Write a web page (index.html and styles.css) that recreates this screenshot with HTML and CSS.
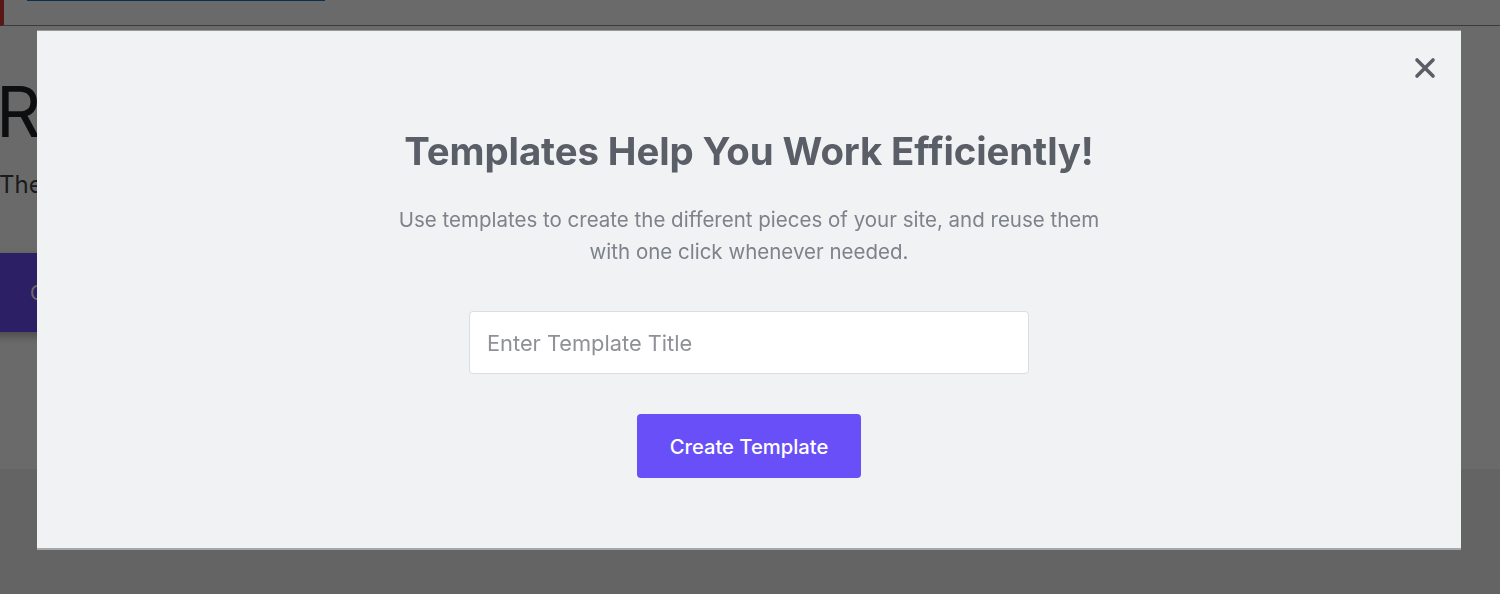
FILE: index.html
```html
<!doctype html>
<html>
<head>
    <meta charset="utf-8">
    <link rel="stylesheet" href="styles.css">
</head>
<body>

<div class="notice">
    <a href="#" class="notice-link">Please update the template library settings</a>
</div>

<div class="page">
    <h1 class="page-title">Reusable Templates</h1>
    <p class="page-text">Theme templates let you build headers, footers and more.</p>
    <button class="page-button">Create New Template</button>
</div>

<div class="modal-backdrop">
    <div class="modal">
        <button class="modal-close" aria-label="Close">
            <svg width="22" height="22" viewBox="0 0 22 22">
                <path d="M3 3 L19 19 M19 3 L3 19" stroke="currentColor" stroke-width="3.6" stroke-linecap="round"/>
            </svg>
        </button>
        <h2 class="modal-title">Templates Help You Work Efficiently!</h2>
        <p class="modal-text">Use templates to create the different pieces of your site, and reuse them with one click whenever needed.</p>
        <form class="modal-form">
            <input type="text" class="modal-input" placeholder="Enter Template Title">
            <button type="submit" class="modal-submit">Create Template</button>
        </form>
    </div>
</div>

</body>
</html>
```

FILE: styles.css
```css
html,
body {
    width: 100%;
    height: 100%;
    padding: 0;
    margin: 0;
}

body {
    background: #f0f0f1;
    font-family: Inter, "Noto Sans", sans-serif;
    overflow: hidden;
}

.notice {
    height: 25px;
    background: #fff;
    border-left: 4px solid #d63638;
    border-bottom: 1px solid #8c8f94;
    padding-left: 23px;
    overflow: hidden;
}

.notice-link {
    display: block;
    margin-top: -19px;
    width: 298px;
    font-size: 16px;
    line-height: 20px;
    color: #2271b1;
    text-underline-offset: 3px;
    text-decoration-thickness: 2px;
    white-space: nowrap;
    overflow: hidden;
}

.page {
    background: #fff;
    height: 443px;
    overflow: hidden;
}

.page-title {
    margin: 46px 0 0 -4px;
    font-size: 70px;
    font-weight: 400;
    line-height: 80px;
    color: #1d2327;
    white-space: nowrap;
}

.page-text {
    margin: 18px 0 0 -1px;
    font-size: 24px;
    color: #3c434a;
    white-space: nowrap;
}

.page-button {
    margin: 54px 0 0 -10px;
    width: 300px;
    height: 79px;
    border: 0;
    border-radius: 8px;
    background: #6a4cf6;
    color: #fff;
    font-family: inherit;
    font-size: 20px;
    text-align: left;
    padding-left: 40px;
    box-shadow: 0 4px 10px rgba(0,0,0,0.3);
}

.modal-backdrop {
    position: fixed;
    top: 0;
    left: 0;
    width: 100%;
    height: 100%;
    background-color: rgba(0,0,0,0.585);
    padding-top: 31px;
    box-sizing: border-box;
}

.modal {
    position: relative;
    width: 1424px;
    height: 519px;
    margin-left: 37px;
    background: #f1f2f4;
    box-sizing: border-box;
    padding-top: 97px;
    text-align: center;
    border-bottom: 2px solid #a7a8ac;
    box-shadow: 0 -1px 0 rgba(180,180,180,0.6);
}

.modal-close {
    position: absolute;
    top: 26px;
    right: 25px;
    padding: 0;
    border: 0;
    background: none;
    color: #5a5e66;
    line-height: 0;
}

.modal-title {
    margin: 0;
    font-size: 38.4px;
    font-weight: 700;
    line-height: 46px;
    letter-spacing: -0.1px;
    color: #5a5e66;
}

.modal-text {
    width: 722px;
    margin: 30px auto 0;
    font-size: 20.5px;
    line-height: 32px;
    color: #7d828b;
}

.modal-form {
    display: flex;
    flex-direction: column;
    align-items: center;
    gap: 40px;
    margin-top: 43px;
}

.modal-input {
    width: 560px;
    height: 63px;
    box-sizing: border-box;
    padding: 0 17px;
    border: 1px solid #dcdde0;
    border-radius: 4px;
    background: #fff;
    font-family: inherit;
    font-size: 21.8px;
    color: #3c434a;
}

.modal-input::placeholder {
    color: #8f9196;
}

.modal-submit {
    width: 224px;
    height: 64px;
    border: 0;
    border-radius: 4px;
    background: #684ff7;
    color: #fff;
    font-family: inherit;
    font-size: 20.2px;
    font-weight: 500;
}
```
